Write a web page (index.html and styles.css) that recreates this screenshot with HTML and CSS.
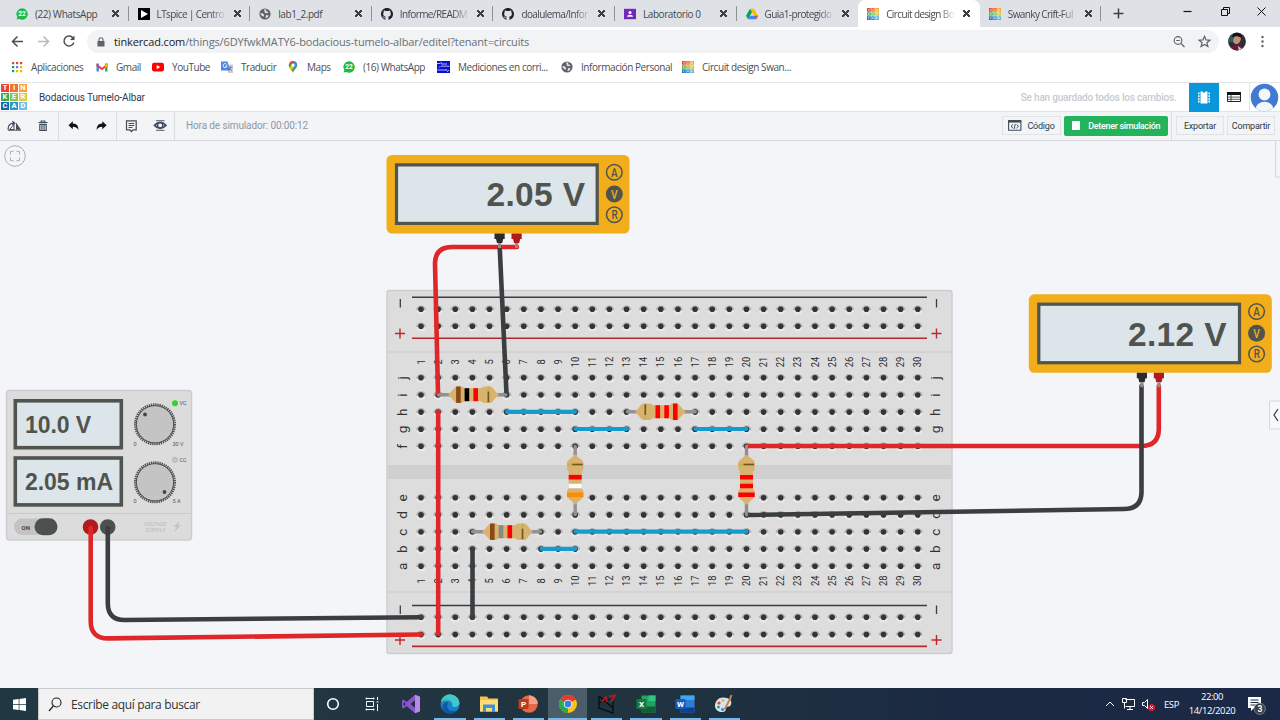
FILE: index.html
```html
<!DOCTYPE html>
<html lang="es">
<head>
<meta charset="utf-8">
<title>Circuit design Bodacious Tumelo-Albar</title>
<link rel="stylesheet" href="styles.css">
</head>
<body>
<svg class="defs" width="0" height="0">
  <symbol id="i-wa" viewBox="0 0 12 12"><path d="M6 .3A5.7 5.7 0 1 1 3.300 11L.5 11.600l.8-2.600A5.700 5.700 0 0 1 6 .3z" fill="#1fbb4a"/><text x="6" y="8.400" text-anchor="middle" class="wa-n">22</text></symbol>
  <symbol id="i-play" viewBox="0 0 12 12"><path d="M0 0h12v12H0z" fill="#000"/><path d="M3 2l7 4-7 4z" fill="#fff"/></symbol>
  <symbol id="i-globe" viewBox="0 0 12 12"><circle cx="6" cy="6" r="5.600" fill="#5f6368"/><path d="M1.500 5l2 .3 1.500 1.500v1.500l-1.300.3-2-2zM5 1.600h2.500l-.5 1.600 2.500.8-1 1.200-2.500-.2zM7 7l2.800.5-1.600 2.300-1.700.3z" fill="#dee1e6"/></symbol>
  <symbol id="i-git" viewBox="0 0 16 16"><path fill="#1f2328" d="M8 0C3.580 0 0 3.580 0 8c0 3.540 2.290 6.530 5.470 7.590.4.070.55-.17.55-.38 0-.19-.01-.82-.01-1.490-2.010.37-2.530-.49-2.690-.94-.09-.23-.48-.94-.82-1.130-.28-.15-.68-.52-.01-.53.63-.01 1.080.58 1.230.82.72 1.210 1.870.87 2.330.66.07-.52.28-.87.51-1.070-1.780-.2-3.640-.89-3.640-3.950 0-.87.31-1.590.82-2.150-.08-.2-.36-1.020.08-2.120 0 0 .67-.21 2.200.82.64-.18 1.320-.27 2-.27s1.360.09 2 .27c1.530-1.040 2.200-.82 2.200-.82.44 1.100.16 1.920.08 2.120.51.56.82 1.270.82 2.150 0 3.070-1.870 3.750-3.650 3.950.29.25.54.73.54 1.480 0 1.070-.01 1.930-.01 2.200 0 .21.15.46.55.38A8 8 0 0 0 16 8c0-4.420-3.580-8-8-8z"/></symbol>
  <symbol id="i-lab" viewBox="0 0 12 12"><path d="M0 .8h12v10.400H0z" fill="#7627bb"/><circle cx="6" cy="4.600" r="1.500" fill="#fff"/><path d="M3 8.700c0-2.700 6-2.700 6 0z" fill="#fff"/></symbol>
  <symbol id="i-drive" viewBox="0 0 12 12"><path d="M4 .8h4L12 7.700H8z" fill="#fbbc04"/><path d="M4 .8L6 4.200 2 11.200 0 7.700z" fill="#0f9d58"/><path d="M3.900 7.700H12l-2 3.500H2z" fill="#4285f4"/><path d="M9.900 7.700H12l-2 3.500z" fill="#ea4335"/></symbol>
  <symbol id="i-tk" viewBox="0 0 12 12"><path d="M0 0h4v4H0z" fill="#e6452f"/><path d="M4 0h4v4H4z" fill="#f0722a"/><path d="M8 0h4v4H8z" fill="#f6a434"/><path d="M0 4h4v4H0z" fill="#3fae58"/><path d="M4 4h4v4H4z" fill="#85bd3c"/><path d="M8 4h4v4H8z" fill="#d8c33a"/><path d="M0 8h4v4H0z" fill="#1670b0"/><path d="M4 8h4v4H4z" fill="#3192c8"/><path d="M8 8h4v4H8z" fill="#62b4dc"/><path d="M4 0v12M8 0v12M0 4h12M0 8h12" stroke="#fff" stroke-width=".5"/><path d="M1.200 1.300h1.600M2 1.300v2M6 1v2M9.300 3V1.300l1.400 1.400V1M1.400 5v2M2.700 5L1.500 6l1.200 1M5.300 5h1.400M5.300 6h1.400M5.300 7h1.400M9.400 7V5h1.200v1M2.700 9.200H1.300v1.700h1.400M5.300 11L6 9.200l.7 1.800M9.300 9.200v1.700l1.400-.8z" stroke="#fff" stroke-width=".5" fill="none"/></symbol>
</svg>

<div class="tabs">
  <div class="tab"><svg class="fav"><use href="#i-wa"/></svg><span class="tt">(22) WhatsApp</span><i class="x"></i></div>
  <div class="tab long"><svg class="fav"><use href="#i-play"/></svg><span class="tt">LTspice | Centro</span><i class="x"></i></div>
  <div class="tab"><svg class="fav"><use href="#i-globe"/></svg><span class="tt">lab1_2.pdf</span><i class="x"></i></div>
  <div class="tab long"><svg class="fav"><use href="#i-git"/></svg><span class="tt">Informe/READM</span><i class="x"></i></div>
  <div class="tab long"><svg class="fav"><use href="#i-git"/></svg><span class="tt">doalulema/Infor</span><i class="x"></i></div>
  <div class="tab"><svg class="fav"><use href="#i-lab"/></svg><span class="tt">Laboratorio 0</span><i class="x"></i></div>
  <div class="tab nosep long"><svg class="fav"><use href="#i-drive"/></svg><span class="tt">Guia1-protegido</span><i class="x"></i></div>
  <div class="tab nosep active long"><svg class="fav"><use href="#i-tk"/></svg><span class="tt">Circuit design Bo</span><i class="x"></i></div>
  <div class="tab long"><svg class="fav"><use href="#i-tk"/></svg><span class="tt">Swanky Crift-Ful</span><i class="x"></i></div>
  <svg class="win" viewBox="0 0 178 27"><path d="M12.500 13.500h10M17.500 8.500v10" stroke="#3c4043" stroke-width="1.500"/><path d="M82.500 11.500h8" stroke="#111" stroke-width="1.200"/><path d="M120.500 9.500h6v6h-6zM122.500 9.500v-2h6v6h-2" fill="none" stroke="#111"/><path d="M156.500 7.500l8 8M164.500 7.500l-8 8" stroke="#111"/></svg>
</div>

<div class="nav">
  <svg class="navic" viewBox="0 0 87 29" fill="none" stroke-width="1.500"><path d="M23 14.500H13M17.500 9.500l-5 5 5 5" stroke="#4a4e52"/><path d="M38 14.500h10M43.500 9.500l5 5-5 5" stroke="#b8babd"/><path d="M73 11a5 5 0 1 0 .8 4.500" stroke="#4a4e52"/><path d="M74.500 8.500v4.500H70z" fill="#4a4e52"/></svg>
  <div class="pill">
    <svg class="lock" viewBox="0 0 8 10"><path d="M.5 4h7v5.500h-7z" fill="#5f6368"/><path d="M2 4V2.800a2 2 0 0 1 4 0V4" fill="none" stroke="#5f6368" stroke-width="1.100"/></svg>
    <span class="url"><b>tinkercad.com</b>/things/6DYfwkMATY6-bodacious-tumelo-albar/editel?tenant=circuits</span>
    <svg class="pillic" viewBox="0 0 50 23" fill="none" stroke="#5f6368" stroke-width="1.200"><circle cx="13" cy="10.500" r="3.800"/><path d="M16 13.500l3.500 3.500M11.200 10.500h3.600"/><path d="M39.500 6.300l1.500 3.600 3.900.3-3 2.500 1 3.800-3.400-2.100-3.400 2.100 1-3.800-3-2.500 3.900-.3z"/></svg>
  </div>
  <svg class="prof" viewBox="0 0 61 29"><defs><clipPath id="cp"><circle cx="18" cy="14.500" r="8.900"/></clipPath></defs><g clip-path="url(#cp)"><path d="M8 5h20v20H8z" fill="#302c35"/><path d="M8 5h6v10H8z" fill="#28605c"/><path d="M11 24c0-8 13-8 14-1v3H11z" fill="#6d1735"/><ellipse cx="18" cy="12.500" rx="3.700" ry="4.800" fill="#c58e78" transform="rotate(25 18 12.500)"/><path d="M13 10c1-6 9-6 10 1-4-2-6-2-10-1z" fill="#17131a"/><path d="M19 19l4 3-3 3z" fill="#cfc5dc"/></g><g fill="#5f6368"><circle cx="43.500" cy="10" r="1.200"/><circle cx="43.500" cy="14.500" r="1.200"/><circle cx="43.500" cy="19" r="1.200"/></g></svg>
</div>

<div class="marks">
  <span><svg viewBox="0 0 12 12"><g fill="#db4437"><path d="M1 1h2.200v2.200H1zM5 1h2.200v2.200H5zM9 1h2.200v2.200H9z"/></g><path d="M1 5h2.200v2.200H1z" fill="#0f9d58"/><path d="M5 5h2.200v2.200H5z" fill="#4285f4"/><path d="M9 5h2.200v2.200H9zM5 9h2.200v2.200H5zM9 9h2.200v2.200H9z" fill="#f4b400"/><path d="M1 9h2.200v2.200H1z" fill="#0f9d58"/></svg>Aplicaciones</span>
  <span><svg viewBox="0 0 12 12"><path d="M.5 2.500h2.400v8H.5z" fill="#4285f4"/><path d="M9.100 2.500h2.400v8H9.100z" fill="#34a853"/><path d="M.5 2.500L6 6.800l5.500-4.300v2.800L6 9.300.5 5.300z" fill="#ea4335"/><path d="M9.100 3.800l2.400-2v3.500l-2.400 1.700z" fill="#fbbc04"/></svg>Gmail</span>
  <span><svg viewBox="0 0 12 12"><rect y="1.700" width="12" height="8.800" rx="2.200" fill="#f00"/><path d="M4.700 4l3.600 2.100-3.600 2.100z" fill="#fff"/></svg>YouTube</span>
  <span><svg viewBox="0 0 12 12"><path d="M4.500 3.500H12V12H7.500z" fill="#c9ccd1"/><path d="M0 .5h6.500l2.500 9H0z" fill="#4d86e8"/><path d="M5.800 3.600a2 2 0 1 0 .2 1.500H4.300" fill="none" stroke="#fff" stroke-width=".9"/><path d="M7.800 6.300h3.500M9.600 5.500c.3 2-1 3.500-2 4.200M8.500 7c.5 1.300 1.300 2 2.500 2.700" fill="none" stroke="#5f6f88" stroke-width=".7"/></svg>Traducir</span>
  <span><svg viewBox="0 0 12 12"><path d="M6 0a4.300 4.300 0 0 0-4.300 4.300C1.700 7 5 8.500 6 12c1-3.500 4.300-5 4.300-7.700A4.300 4.300 0 0 0 6 0z" fill="#34a853"/><path d="M2.600 1.700A4.300 4.300 0 0 1 7.500.3L4.200 4.200z" fill="#ea4335"/><path d="M7.500.3a4.300 4.300 0 0 1 2.600 2.700L6.700 6.900 6 4z" fill="#4285f4"/><path d="M2 6.300L6 4l.7 2.900-3 2z" fill="#fbbc04"/><circle cx="6" cy="4.200" r="1.600" fill="#fff"/></svg>Maps</span>
  <span><svg viewBox="0 0 12 12"><use href="#i-wa"/></svg>(16) WhatsApp</span>
  <span><svg class="w13" viewBox="0 0 13 12"><path d="M0 0h13v12H0z" fill="#0a10cf"/><path d="M0 2.500h3l1-1 .5 1.500h5.500M2 6.500l1.500-1.500M4 5.200h8.500M.5 9h8.500M9 8l1.500 2.500L12 9" stroke="#dfe3ff" fill="none" stroke-width=".8"/></svg>Mediciones en corri...</span>
  <span><svg viewBox="0 0 12 12"><use href="#i-globe"/></svg>Información Personal</span>
  <span><svg viewBox="0 0 12 12"><use href="#i-tk"/></svg>Circuit design Swan...</span>
</div>

<div class="head">
  <div class="logo"><b>T</b><b>I</b><b>N</b><b>K</b><b>E</b><b>R</b><b>C</b><b>A</b><b>D</b></div>
  <span class="name">Bodacious Tumelo-Albar</span>
  <span class="saved">Se han guardado todos los cambios.</span>
  <div class="chip"><svg width="30" height="29" viewBox="0 0 30 29"><path d="M11.500 8.500h2.300a1.200 1.200 0 0 0 2.400 0h2.300v12h-7z" fill="#fff"/><path d="M9.800 9.500v10M20.200 9.500v10" stroke="#fff" stroke-width="1.500" stroke-dasharray="1.800 .9"/></svg></div>
  <div class="list"><svg width="31" height="29" viewBox="0 0 31 29"><path d="M8.500 10h13v8.500h-13z" fill="#fff" stroke="#222"/><path d="M8 9h14v3H8z" fill="#111"/><path d="M8.500 14.100h13M8.500 16.300h13M12 12v6.500" stroke="#444" stroke-width=".9"/></svg></div>
  <div class="user"><svg width="29" height="29" viewBox="0 0 29 29"><defs><clipPath id="cu"><circle cx="14.500" cy="14.500" r="13.700"/></clipPath></defs><g clip-path="url(#cu)"><path d="M0 0h29v29H0z" fill="#3f7bd0"/><circle cx="14.500" cy="11.500" r="5.900" fill="#f3f7fc"/><ellipse cx="14.500" cy="26" rx="9" ry="7.200" fill="#f3f7fc"/></g></svg></div>
</div>

<div class="tools">
  <div class="grp"><svg width="58" height="28" viewBox="0 0 58 28"><path d="M8 17.700c0-4.500 2-6.500 6-6.500M12.300 9.300l2.500 2-2.500 1.800" fill="none" stroke="#3f4d5c" stroke-width="1.200"/><path d="M14 12.500v5H9.500z" fill="#f3f4f6" stroke="#3f4d5c"/><path d="M16 10.500v7.200h5z" fill="#3f4d5c"/><path d="M8 18.200h13" stroke="#3f4d5c"/><path d="M38.500 10.500h9M41.200 10V9h3.600v1M39.800 12.300h6.400v6.200h-6.400z" fill="none" stroke="#3f4d5c" stroke-width="1.200"/><path d="M41.700 13v5M43 13v5M44.300 13v5" stroke="#3f4d5c" stroke-width=".8"/></svg></div>
  <div class="grp"><svg width="57" height="28" viewBox="0 0 57 28"><path d="M13.800 9.200v2.400c4 .2 5.700 2.400 5.600 6.400-1.200-2.500-2.800-3.200-5.600-3.200v2.500L9.500 13.200z" fill="#111"/><path d="M43.300 9.200v2.400c-4 .2-5.700 2.400-5.600 6.400 1.200-2.500 2.800-3.200 5.600-3.200v2.500l4.300-4.100z" fill="#111"/></svg></div>
  <div class="grp"><svg width="57" height="28" viewBox="0 0 57 28" fill="none" stroke="#3f4d5c" stroke-width="1.200"><path d="M9.500 8.800h9.700v9h-3.200l-1.600 1.700-1.600-1.700H9.500z"/><path d="M11.500 11.500h5.800M11.500 13.500h5.800M11.500 15.500h4" stroke-width="1"/><path d="M37.500 13.300q5.700-6 11.400 0q-5.700 6-11.400 0z" stroke-width="1.800"/><circle cx="43.200" cy="13.300" r="2.600" stroke-width="1.300"/><path d="M39 8.700h8.500M39 18.300h8.500" stroke-width=".9"/></svg></div>
  <span class="time">Hora de simulador: 00:00:12</span>
  <div class="btn code"><svg width="14" height="11" viewBox="0 0 14 11"><path d="M.6.600h12.300v9.600H.6z" fill="none" stroke="#3f4d5c" stroke-width="1.100"/><path d="M.5 1.800h12.500" stroke="#3f4d5c" stroke-width="1.600"/><path d="M5 4.500L3 6.300l2 1.800M8.500 4.500l2 1.800-2 1.800M7.300 4l-1.200 5" fill="none" stroke="#3f4d5c"/></svg>Código</div>
  <div class="btn stop"><i></i>Detener simulación</div>
  <div class="rt"><div class="btn exp">Exportar</div><div class="btn share">Compartir</div></div>
</div>

<div class="stage">
<svg id="circuit" width="1280" height="547" viewBox="0 141 1280 547">
  <defs>
    <g id="hole"><circle cy=".6" r="5" fill="#e7e7e7"/><path d="M-5 1.200a5 5 0 0 1 10 0q-5-1-10 0z" fill="#b4b4b4"/><circle r="2.800" cy=".3" fill="#343434"/></g>
    <g id="meter"><rect x="386.500" y="155" width="243" height="78.500" rx="5.500" fill="#f2ad1b"/><rect x="396.500" y="164.900" width="200.700" height="58.500" fill="#dbe5ea" stroke="#50544f" stroke-width="3.200"/>
      <g fill="none" stroke="#50544f" stroke-width="1.500"><circle cx="614.300" cy="172.200" r="7.800"/><circle cx="614.300" cy="214.700" r="7.800"/></g><circle cx="614.300" cy="194" r="8.500" fill="#50544f"/>
      <g class="mb"><text x="611" y="176.500" textLength="6.600" lengthAdjust="spacingAndGlyphs">A</text><text x="611.500" y="219" textLength="6.200" lengthAdjust="spacingAndGlyphs">R</text><text x="611" y="198.500" textLength="6.600" lengthAdjust="spacingAndGlyphs" fill="#f2ad1b">V</text></g>
      <path d="M494.500 233.500h10.200v5.500h-1.500l-1 4h-5.200l-1-4h-1.500z" fill="#2b2b2b"/><path d="M511.500 233.500h10.200v5.500h-1.500l-1 4h-5.200l-1-4h-1.500z" fill="#b01a1d"/></g>
    <g id="tips" stroke="#9a8a8a" stroke-width="3.200"><path d="M499.600 243v5M516.600 243v5"/></g>
    <g id="res"><path d="M-34 0h68" stroke="#929292" stroke-width="3.400" stroke-linecap="round"/><path d="M-24 0q0-1.600 2-2.200l4.500-5q1-1 2.500-1h4q1.500.4 3 1.700H8.500q1.500-1.300 3-1.700h6q1.500 0 2.500 1l4 5q2 .6 2 2.200t-2 2.200l-4 5q-1 1-2.500 1h-6q-1.500-.4-3-1.700H-8q-1.500 1.300-3 1.700h-4q-1.500 0-2.500-1l-4.500-5q-2-.6-2-2.200z" fill="#d8b26e"/><path d="M16 -8.200v5.200" stroke="#c9b13c" stroke-width="2"/><path d="M16 -3v10.500" stroke="#6c5a1e" stroke-width="1.700"/></g>
  </defs>

  <g fill="none" stroke="#a3a7ab" stroke-width=".9"><circle cx="15" cy="156" r="10.300"/><path d="M10.500 154.500v-3.200h3.200M16.300 151.300h3.200v3.200M19.500 157.500v3.200h-3.200M13.700 160.700h-3.200v-3.200"/></g>

  <g id="supply">
    <rect x="6.500" y="390.500" width="185" height="149.500" rx="3" fill="#dcdcdc" stroke="#cdcdcd" stroke-width="1.500"/>
    <path d="M7 513.500h184" stroke="#cacaca"/>
    <g fill="#dbe5ea" stroke="#50544f" stroke-width="3.600"><rect x="15.300" y="400.800" width="106" height="46.900"/><rect x="15.300" y="458" width="106" height="46.900"/></g>
    <g class="lcd s"><text x="25" y="433" textLength="66">10.0 V</text><text x="25" y="490" textLength="88">2.05 mA</text></g>
    <g fill="#c4c4c4"><circle cx="155" cy="424.300" r="18"/><circle cx="155" cy="482.300" r="18"/></g>
    <g fill="none" stroke="#4b4f4e"><g stroke-width="1"><circle cx="155" cy="424.300" r="18.600"/><circle cx="155" cy="482.300" r="18.600"/></g><g stroke-width="2.600" stroke-dasharray="1.300 .85"><circle cx="155" cy="424.300" r="19.700"/><circle cx="155" cy="482.300" r="19.700"/></g></g>
    <circle cx="145" cy="414.500" r="1.900" fill="#444"/><circle cx="164.500" cy="492" r="1.900" fill="#444"/>
    <circle cx="175" cy="403.300" r="3" fill="#2fd62c"/><circle cx="175" cy="459.800" r="2.600" fill="#c6c6c6" stroke="#aaa" stroke-width=".6"/>
    <g class="tiny"><text x="179.500" y="405.300">VC</text><text x="179.500" y="462">CC</text><text x="133.500" y="445.700">0</text><text x="172.500" y="445.700">30 V</text><text x="133.500" y="502.700">0</text><text x="172.500" y="502.700">5 A</text></g>
    <rect x="14" y="518.500" width="43" height="16.500" rx="8.200" fill="#c3c3c3"/><rect x="34.500" y="518.300" width="23" height="17" rx="8.500" fill="#4c504f"/>
    <text class="on" x="21.500" y="529.500">ON</text>
    <g class="vs"><text x="144" y="525.500" textLength="22.500">VOLTAGE</text><text x="145.500" y="532.300" textLength="20">SUPPLY</text></g>
    <path d="M180 520.500l-6.500 6.500h3.200l-2.700 5.500 7-7.300h-3.300z" fill="#c3c3c3"/>
    <circle cx="90.500" cy="527" r="7.800" fill="#af1b1e"/><circle cx="107.700" cy="527" r="7.800" fill="#4c504f"/>
  </g>

  <g id="board">
    <rect x="387" y="290.500" width="565" height="363" rx="2.500" fill="#dddddd" stroke="#cecece" stroke-width="1.500"/>
    <path d="M388 352h563.500M388 592h563.500" stroke="#cfcfcf" stroke-width="1.300"/>
    <path d="M387.500 465h564.500v14H387.500z" fill="#cfcfcf"/>
    <path d="M412 297.300h515M412 605.500h515" stroke="#3c3c3c" stroke-width="1.400"/>
    <path d="M412 338.300h515M412 646.400h515" stroke="#b5282c" stroke-width="1.600"/>
    <path d="M400.300 299v8.500M936.500 299v8.500M400.300 605.500v8.500M936.500 605.500v8.500" stroke="#3c3c3c" stroke-width="1.300"/>
    <path d="M395 333.500h10M400 328.500v10M931.500 333.500h10M936.500 328.500v10M395 640h10M400 635v10M931.500 640h10M936.500 635v10" stroke="#c0272b" stroke-width="1.400"/>
  </g>

  <g id="meters">
    <use href="#meter"/><use href="#meter" x="642.300" y="139.300"/>
    <g class="lcd"><text x="486.500" y="206.300" textLength="98.500">2.05 V</text><text x="1128" y="345.600" textLength="98.500">2.12 V</text></g>
  </g>

  <g fill="none" stroke="#169ad0" stroke-width="4.200" stroke-linecap="round"><path d="M507 411.800h68M575.500 429h51.500M695.500 429h51M575.500 531.700h171M541.500 548.800h34"/></g>

  <g transform="translate(472.400 394.700)"><use href="#res"/><path d="M-14-8.200V8.200" stroke="#8b4a13" stroke-width="4.600"/><path d="M-5.500-6.500v13" stroke="#000" stroke-width="4.600"/><path d="M3.300-6.500v13" stroke="#f00" stroke-width="4.600"/></g>
  <g transform="translate(661.300 411.800) rotate(180)"><use href="#res"/><path d="M-14-8.200V8.200M-5.300-6.500v13M3.500-6.500v13" stroke="#f00" stroke-width="4.600"/></g>
  <g transform="translate(575.200 480.500) rotate(-90)"><use href="#res"/><path d="M-14.300-8.200V8.200" stroke="#ff8c00" stroke-width="4.600"/><path d="M-5.500-6.500v13" stroke="#fff" stroke-width="4.600"/><path d="M3.300-6.500v13" stroke="#f00" stroke-width="4.600"/></g>
  <g transform="translate(746.500 480.500) rotate(-90)"><use href="#res"/><path d="M-14.300-8.200V8.200M-5.500-6.500v13M3.300-6.500v13" stroke="#f00" stroke-width="4.600"/></g>
  <g transform="translate(506.500 531.700)"><use href="#res"/><path d="M-14.200-8.200V8.200" stroke="#8b4a13" stroke-width="4.600"/><path d="M-5.500-6.500v13" stroke="#888" stroke-width="4.600"/><path d="M3.300-6.500v13" stroke="#f00" stroke-width="4.600"/></g>

  <g fill="none" stroke-width="4.600" stroke-linecap="round">
    <g stroke="#df2628"><path d="M517 247H452q-17 0-17 17L438 393"/><path d="M438.200 412v222"/><path d="M90.700 528v93q0 17.500 17.500 17.400L421 634.500"/><path d="M748 446h393q17.800 0 17.800-17V386"/></g>
    <g stroke="#3a3e40"><path d="M499.700 247l6.800 147"/><path d="M472.500 549v68"/><path d="M107.800 528v75q0 17.500 17.500 17L421 617.300"/><path d="M748 515l376-6q17.500-.3 17.500-17V386"/></g>
  </g>
  <g fill="none" stroke="#8f8f8f" stroke-width="3" stroke-linecap="round"><path d="M438.500 394.700h4M501 394.700h5M746.500 446v8M746.500 507v8"/></g>
  <use href="#tips"/><use href="#tips" x="642.300" y="139.300"/>

  <path d="M1269.500 401h11v28h-11z" fill="#f7f8f9" stroke="#d4d8dc"/><path d="M1278 409l-4 6 4 6" fill="none" stroke="#333" stroke-width="1.200"/>
  <path d="M1275.500 140v37h4.500" fill="none" stroke="#d4d8dc"/>
</svg>
</div>

<div class="bar">
  <div class="start"><svg width="13" height="13" viewBox="0 0 13 13"><path d="M0 1.800l5.700-.8v5.200H0zM6.400.9L13 0v6.200H6.400zM0 6.900h5.700v5.200L0 11.300zM6.400 6.900H13V13l-6.600-.9z" fill="#fff"/></svg></div>
  <div class="search"><svg width="14" height="15" viewBox="0 0 14 15"><circle cx="8.500" cy="5.500" r="4.500" fill="none" stroke="#222" stroke-width="1.100"/><path d="M5.300 9L1 14" stroke="#222" stroke-width="1.200"/></svg><span>Escribe aquí para buscar</span></div>
  <div class="app first"><svg viewBox="0 0 20 20"><circle cx="10" cy="10" r="5.300" fill="none" stroke="#fff" stroke-width="1.600"/></svg></div>
  <div class="app"><svg viewBox="0 0 20 20" fill="none" stroke="#fff"><path d="M4.500 7.500h7v5h-7zM3.500 4.500h9M3.500 15.500h9M4.500 3.500v2M11.500 3.500v2M4.500 14.500v2M11.500 14.500v2M15.500 3v3M15.500 10v7M14.500 8h2"/></svg></div>
  <div class="app"><svg viewBox="0 0 20 20"><path d="M14 .8l5 2v14.400l-5 2L5.500 12 2.500 14.500 1 13.800V6.200l1.500-.7L5.500 8z" fill="#8b52d0"/><path d="M14 6.300v7.400L9.500 10zM2.700 7.800v4.400L4.800 10z" fill="#20313d"/><path d="M14 .8l5 2v14.400l-5 2z" fill="#b38be8"/></svg></div>
  <div class="app run"><svg viewBox="0 0 20 20"><circle cx="10" cy="10" r="9.500" fill="#1b7fd0"/><path d="M.8 8C2.500-2 17-2 19.300 8c.7 5-4.600 5.500-7.300 4.300C13.500 8 9 4.500.8 8z" fill="#38c6a6"/><path d="M10 .5c5 0 9 3.500 9.400 8.500.2 3-3.500 4.300-6.400 3.500 1-5-3-9-10-8 1.600-2.400 4-4 7-4z" fill="#48c6e0" opacity=".7"/><path d="M7.500 10c-1.500 5 4 9 9.500 6.200-5 5.800-14.500 3.600-14.500-3.200 0-3 2.500-5 6-5z" fill="#0c59a4"/></svg></div>
  <div class="app run"><svg viewBox="0 0 20 20"><path d="M1 2.500h7l1.500 2H19v13H1z" fill="#f5c445"/><path d="M1 6h18v11.500H1z" fill="#ffdc74"/><path d="M4 10.500h12v7.500h-3v-4H7v4H4z" fill="#3c93d8"/></svg></div>
  <div class="app run"><svg viewBox="0 0 20 20"><circle cx="11" cy="10" r="8.700" fill="#e2694a"/><path d="M11 1.300a8.700 8.700 0 0 1 8.700 8.700H11z" fill="#f4a083"/><rect x=".5" y="5" width="10" height="10" rx="1" fill="#bf3a1d"/><text class="ol" x="5.500" y="13">P</text></svg></div>
  <div class="app run on-app"><svg viewBox="0 0 20 20"><circle cx="10" cy="10" r="9" fill="#fbc116"/><path d="M10 10L2.200 5.500A9 9 0 0 1 17.800 5.500z" fill="#e33b2e"/><path d="M2.200 5.500L10 10l0 9A9 9 0 0 1 2.200 5.500z" fill="#2da94f"/><path d="M10 5.900h7.900l-1-1.500-9 .8z" fill="#e33b2e"/><circle cx="10" cy="10" r="4.300" fill="#fff"/><circle cx="10" cy="10" r="3.400" fill="#3b7de9"/></svg></div>
  <div class="app run"><svg viewBox="0 0 20 20"><path d="M2 2v12l14 5V7M2 2l14 12M2 9l11-4" fill="none" stroke="#080b0e" stroke-width="1.300"/><path d="M5 8l4-5 1 5M12 2.500l6-1-4 6.500" fill="none" stroke="#b3191f" stroke-width="1.800"/></svg></div>
  <div class="app run"><svg viewBox="0 0 20 20"><path d="M5.500 1.500h14v17h-14z" fill="#21a366"/><path d="M12.500 1.500h7v5.500h-7z" fill="#33c481"/><path d="M5.500 12.500h14v6h-14z" fill="#185c37"/><rect x=".5" y="5" width="10" height="10" rx="1" fill="#107c41"/><text class="ol" x="5.500" y="13">X</text></svg></div>
  <div class="app run"><svg viewBox="0 0 20 20"><path d="M5.500 1.500h14v17h-14z" fill="#2b7cd3"/><path d="M5.500 1.500h14v4.500h-14z" fill="#41a5ee"/><path d="M5.500 13.500h14v5h-14z" fill="#103f91"/><rect x=".5" y="5" width="10" height="10" rx="1" fill="#185abd"/><text class="ol" x="5.500" y="13">W</text></svg></div>
  <div class="app run"><svg viewBox="0 0 20 20"><path d="M9 3.500c6 0 9.500 3 8 7-1 3-3.500 1.500-4.500 3s0 4-3.500 4.500C4 18.500.5 15 1 11s3.500-7.500 8-7.500z" fill="#d4e3ee"/><circle cx="5" cy="9" r="1.600" fill="#e2483d"/><circle cx="9" cy="6.500" r="1.500" fill="#f1b92e"/><circle cx="4.500" cy="13" r="1.500" fill="#3aa655"/><circle cx="8.500" cy="15.500" r="1.500" fill="#3d7fd6"/><path d="M17.500 1l-2 5-5 9.500" fill="none" stroke="#c98442" stroke-width="2"/></svg></div>
  <div class="tray">
    <svg width="52" height="20" viewBox="0 0 52 20" fill="none" stroke="#fff"><path d="M1 12l4-4 4 4"/><path d="M20.500 5.500h9v7h-9M25 12.500v3M22 15.500h6M17.500 4.500h4v4h-4zM19.500 8.500v6"/><path d="M37.500 8.500h2l3-3v9l-3-3h-2z"/><circle cx="46.500" cy="13.500" r="3.500" fill="#e81123" stroke="none"/><path d="M45.200 12.200l2.600 2.600M47.800 12.200l-2.600 2.600"/></svg>
    <span class="esp">ESP</span>
    <span class="clock">22:00<br>14/12/2020</span>
    <svg width="20" height="24" viewBox="0 0 20 24"><path d="M1 5h13v11H7l-3 3v-3H1z" fill="#fff"/><path d="M3.500 8h8M3.500 10.500h8M3.500 13h5" stroke="#1d2c45"/><circle cx="12.800" cy="16.800" r="5.600" fill="#3b4047" stroke="#8a8f96" stroke-width=".8"/><text class="cnt" x="12.800" y="20">3</text></svg>
  </div>
</div>
<script src="board.js"></script>
</body>
</html>
```
FILE: styles.css
```css
* { box-sizing: border-box; }
body { margin: 0; width: 1280px; height: 720px; overflow: hidden; display: flex; flex-direction: column; font-family: "Open Sans", sans-serif; background: #fff; }
.defs { display: none; }

/* browser tabs */
.tabs { height: 27px; flex: none; background: #dee1e6; display: flex; padding-left: 7px; }
.tab { width: 121.600px; flex: none; position: relative; display: flex; align-items: center; padding-left: 9px; font-size: 10px; letter-spacing: -.42px; color: #45494d; }
.tab::after { content: ""; position: absolute; right: 0; top: 6px; height: 15px; width: 1px; background: #8e9297; }
.tab.nosep::after { display: none; }
.fav { width: 12px; height: 12px; flex: none; }
.tt { margin-left: 7px; width: 70px; white-space: nowrap; }
.long .tt { letter-spacing: -.6px; -webkit-mask-image: linear-gradient(90deg, #000 76%, transparent 100%); mask-image: linear-gradient(90deg, #000 76%, transparent 100%); }
.x { width: 7px; height: 7px; margin-left: 7px; background: linear-gradient(45deg, transparent 42%, #3c4043 42% 58%, transparent 58%), linear-gradient(-45deg, transparent 42%, #3c4043 42% 58%, transparent 58%); }
.active { background: #fff; border-radius: 7px 7px 0 0; }
.win { width: 178px; height: 27px; flex: none; }
.wa-n { font: bold 6.500px Roboto, sans-serif; fill: #fff; letter-spacing: 0; }

/* address row */
.nav { height: 29px; flex: none; display: flex; align-items: center; }
.navic { width: 87px; height: 29px; }
.pill { width: 1132px; height: 23px; border-radius: 12px; background: #f1f3f4; display: flex; align-items: center; padding-left: 10px; }
.lock { width: 8px; height: 10px; }
.url { margin-left: 9px; font-size: 11px; letter-spacing: -.14px; color: #6b6f74; white-space: nowrap; flex: 1; }
.url b { font-weight: 400; color: #202124; }
.pillic { width: 50px; height: 23px; margin-right: 4px; }
.prof { width: 61px; height: 29px; }

/* bookmarks */
.marks { height: 27px; flex: none; display: grid; grid-template-columns: 85px 56px 69px 66px 56px 94px 124px 121px 120px; padding: 0 0 4px 11px; border-bottom: 1px solid #e3e5e8; font-size: 10px; letter-spacing: -.44px; color: #4b4f54; }
.marks span { display: flex; align-items: center; gap: 8px; white-space: nowrap; }
.marks svg { width: 12px; height: 12px; flex: none; }
.marks .w13 { width: 13px; }

/* project header */
.head { height: 29px; flex: none; display: flex; align-items: center; background: #fff; font-family: Roboto, sans-serif; border-bottom: 1px solid #dfe2e5; }
.logo { width: 26px; height: 26px; margin-left: 1px; display: grid; grid-template-columns: repeat(3, 8px); grid-auto-rows: 8px; gap: 1px; }
.logo b { font: bold 7.500px/8.500px Roboto, sans-serif; color: #fff; text-align: center; background: #e6452f; }
.logo b:nth-child(2) { background: #f0722a; } .logo b:nth-child(3) { background: #f6a434; }
.logo b:nth-child(4) { background: #35ab54; } .logo b:nth-child(5) { background: #8cc63f; } .logo b:nth-child(6) { background: #dccb48; }
.logo b:nth-child(7) { background: #1268a8; } .logo b:nth-child(8) { background: #2d96cf; } .logo b:nth-child(9) { background: #74bfe6; }
.name { margin-left: 12px; font-size: 10px; letter-spacing: -.13px; color: #2d3b4e; flex: 1; }
.saved { font-size: 10px; font-weight: 500; letter-spacing: -.2px; color: #c5cbd1; margin-right: 12.500px; }
.chip { width: 30px; height: 29px; background: #0a97d9; }
.list { width: 31px; height: 29px; border-right: 1px solid #e3e6e9; }
.user { width: 30px; height: 29px; }

/* simulator toolbar */
.tools { height: 29px; flex: none; display: flex; align-items: center; background: #f3f4f6; border-bottom: 1px solid #d5d9dd; padding-bottom: 1px; font-family: Roboto, sans-serif; font-size: 9px; color: #2f3a46; }
.grp { height: 28px; border-right: 1px solid #d9dde1; }
.grp svg { display: block; }
.time { margin-left: 11px; font-size: 10px; letter-spacing: -.12px; color: #8b98a5; flex: 1; }
.btn { height: 19px; display: flex; align-items: center; justify-content: center; border: 1px solid #dfe3e6; white-space: nowrap; letter-spacing: -.22px; }
.code { width: 59px; gap: 5px; }
.stop { width: 104px; height: 20px; margin-left: 3px; background: #23b35a; border: 0; border-radius: 2px; color: #fff; font-weight: 500; letter-spacing: -.33px; gap: 8px; }
.stop i { width: 8.500px; height: 8.500px; background: #fff; }
.rt { margin-left: 3px; height: 28px; display: flex; align-items: center; gap: 3px; border-left: 1px solid #d9dde1; padding: 0 5px 0 4px; }
.exp { width: 48px; } .share { width: 48px; }

/* canvas */
.stage { height: 547px; flex: none; background: #f3f5f8; }
.stage svg { display: block; }
.lcd { font: bold 33.500px "Liberation Sans", Arial, sans-serif; fill: #50544f; }
.lcd.s { font-size: 23px; }
.mb { font: 500 12px Roboto, sans-serif; fill: #50544f; }
.tiny { font: 5.500px Roboto, sans-serif; fill: #555; }
.on { font: bold 6px Roboto, sans-serif; fill: #444; }
.vs { font: 5.500px Roboto, sans-serif; fill: #bababa; }
.col { font: 10.200px Roboto, sans-serif; fill: #2c2c2c; text-anchor: middle; }
.row { font: 13.500px Roboto, sans-serif; fill: #333; text-anchor: middle; }

/* taskbar */
.bar { height: 32px; flex: none; display: flex; align-items: stretch; background: linear-gradient(90deg, #213842 0%, #20343f 48%, #1b2a42 75%, #1b2947 100%); color: #fff; }
.start { width: 38px; display: flex; align-items: center; justify-content: center; }
.search { width: 276px; background: #f2f2f2; border: 1px solid #c5c9cb; display: flex; align-items: center; padding-left: 9px; gap: 9px; font-size: 12px; letter-spacing: -.35px; color: #333; }
.app { width: 39.200px; display: flex; align-items: center; justify-content: center; position: relative; }
.app.first { width: 38px; }
.app svg { width: 20px; height: 20px; }
.run::after { content: ""; position: absolute; left: 4px; right: 4px; bottom: 0; height: 2px; background: #76b9ed; }
.on-app { background: #4b5d68; }
.on-app::after { left: 0; right: 0; }
.ol { font: bold 8px Roboto, sans-serif; fill: #fff; text-anchor: middle; }
.tray { margin-left: auto; display: flex; align-items: center; padding-right: 13px; font-size: 9.500px; letter-spacing: -.4px; }
.esp { margin-left: 7px; }
.clock { width: 50px; margin: 0 10px 0 8px; text-align: center; line-height: 14px; white-space: nowrap; }
.cnt { font: bold 8.500px Roboto, sans-serif; fill: #fff; text-anchor: middle; }
```
FILE: board.js
```js
// Breadboard holes and labels, laid on a regular pitch.
const NS = 'http://www.w3.org/2000/svg';
const board = document.getElementById('board');
const PITCH = 17.13, X0 = 421;
const rows = { j: 377.5, i: 394.7, h: 411.8, g: 429, f: 446, e: 497.5, d: 514.6, c: 531.7, b: 548.8, a: 566 };

function label(cls, txt, x, y, len) {
  const t = document.createElementNS(NS, 'text');
  t.setAttribute('class', cls);
  t.setAttribute('transform', `translate(${x} ${y}) rotate(-90)`);
  if (len) {
    t.setAttribute('textLength', len);
    t.setAttribute('lengthAdjust', 'spacingAndGlyphs');
  }
  t.textContent = txt;
  board.appendChild(t);
}

for (const y of [309, 326, ...Object.values(rows), 617, 634.3]) {
  for (let n = 0; n < 30; n++) {
    const u = document.createElementNS(NS, 'use');
    u.setAttribute('href', '#hole');
    u.setAttribute('x', X0 + n * PITCH);
    u.setAttribute('y', y);
    board.appendChild(u);
  }
}
for (let n = 1; n <= 30; n++) {
  const x = X0 + (n - 1) * PITCH + 3.6;
  const len = n > 9 ? 10.5 : 5.2;
  label('col', n, x, 362, len);
  label('col', n, x, 580.8, len);
}
for (const [k, y] of Object.entries(rows)) {
  label('row', k, 407, y + 0.4);
  label('row', k, 939.6, y + 0.4);
}
```
